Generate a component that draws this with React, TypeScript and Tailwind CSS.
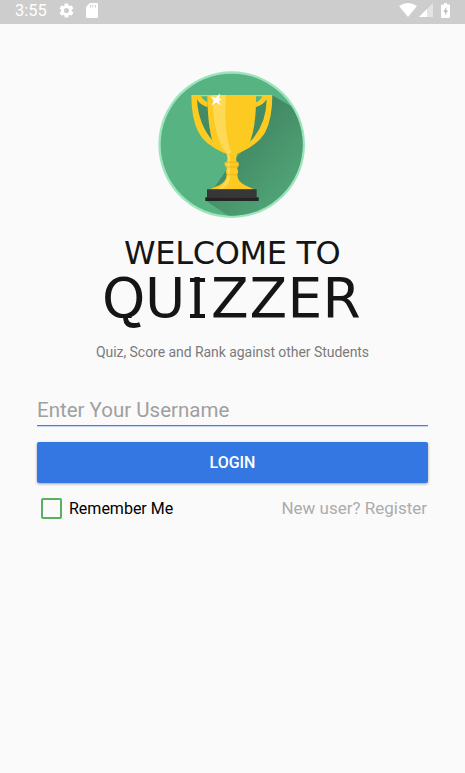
function Trophy() {
  return (
    <svg className="block h-[160px] w-[160px]" viewBox="0 0 480 480" aria-label="Trophy">
      <defs>
        <linearGradient id="shade" x1="260" y1="230" x2="430" y2="380" gradientUnits="userSpaceOnUse">
          <stop offset="0" stopColor="#428863" />
          <stop offset="1" stopColor="#51a578" />
        </linearGradient>
        <clipPath id="disc"><circle cx="245" cy="239" r="213" /></clipPath>
        <clipPath id="bowl"><path d="M172 90H318Q319 184 300 230Q285 246 264 263Q257 270 259 289Q269 292 266 302Q263 306 261 310Q267 318 262 328Q262 350 285 361L312 373H180L208 361Q230 349 230 328Q226 317 231 309Q222 303 224 293L232 289Q235 270 224 262L188 230Q173 184 172 90Z" /></clipPath>
      </defs>
      <circle cx="245" cy="239" r="220" fill="#9de4bc" />
      <circle cx="245" cy="239" r="213" fill="#57b482" />
      <g clipPath="url(#disc)">
        <path d="M367 91L540 190V480H275L166 406L240 300L300 230Z" fill="url(#shade)" />
        <path d="M137 100L150 113L174 126L190 229Q145 180 137 100Z" fill="#428b64" />
        <path d="M354 100L340 113L318 126L302 227Q346 180 354 100Z" fill="#428b64" />
      </g>
      <path d="M124 90H172V126Q151 121 141 103Q145 181 190 230L236 267L220 263Q164 239 145 201Q124 160 124 90ZM367 90H318V126Q339 121 350 103Q349 180 300 230L255 266L270 263Q326 237 346 201Q367 160 367 90Z" fill="#fdca21" />
      <path d="M153 94H175V112Q160 108 153 94ZM337 94H318V112Q331 108 337 94Z" fill="#57b482" />
      <path d="M172 90H318Q319 184 300 230Q285 246 264 263Q257 270 259 289Q269 292 266 302Q263 306 261 310Q267 318 262 328Q262 350 285 361L312 373H180L208 361Q230 349 230 328Q226 317 231 309Q222 303 224 293L232 289Q235 270 224 262L188 230Q173 184 172 90Z" fill="#fdca21" />
      <g clipPath="url(#bowl)">
        <path d="M187 90H228Q220 205 244 261L234 269Q190 225 187 90Z" fill="#fed957" />
        <path d="M232 271H239V345Q233 363 216 373H204Q232 354 233 326Z" fill="#fed957" />
        <path d="M222 292H270M228 306H267M228 329H266" stroke="#dfac1b" strokeWidth="2" />
      </g>
      <path d="M210 85L207 98L215 105L206 107L211 121L199 112L184 122L192 107L181 94L197 99Z" fill="#fff" />
      <path d="M171 373H320V397H171Z" fill="#373737" />
      <path d="M166 397H326V408H166Z" fill="#232323" />
    </svg>
  );
}

export default function App() {
  return (
    <div className="flex h-[773px] w-[465px] flex-col bg-[#fafafa] font-[Roboto,sans-serif]">
      <header className="flex h-6 items-start justify-between bg-[#cdcdcd] pr-[15px] pl-[15px] text-white">
        <div className="flex items-start">
          <span className="w-11 text-[16.5px] leading-[22px]">3:55</span>
          <svg className="mt-[2px] -ml-px h-[17px] w-[17px]" viewBox="0 0 24 24" fill="currentColor"><path d="M19.4 13a7.6 7.6 0 0 0 0-2l2.1-1.6c.2-.1.2-.4.1-.6l-2-3.5c-.1-.2-.4-.3-.6-.2l-2.5 1c-.5-.4-1.1-.7-1.7-1L14.4 2.4A.5.5 0 0 0 14 2h-4a.5.5 0 0 0-.5.4l-.4 2.7c-.6.2-1.1.6-1.7 1L5 5.1c-.3-.1-.5 0-.6.2l-2 3.5c-.1.2-.1.5.1.6L4.600 11a8 8 0 0 0 0 2l-2.100 1.600c-.2.1-.2.4-.1.6l2 3.500c.1.2.4.3.6.2l2.400-1c.6.4 1.100.7 1.700 1l.4 2.700c0 .2.2.4.5.4h4c.2 0 .4-.2.5-.4l.4-2.700c.6-.2 1.100-.6 1.700-1l2.500 1c.2.1.5 0 .6-.2l2-3.500c.1-.2.1-.5-.1-.6L19.400 13ZM12 15.600a3.600 3.600 0 1 1 0-7.200 3.600 3.600 0 0 1 0 7.200Z" /></svg>
          <svg className="mt-[3px] ml-[11px] h-[15px] w-[12px]" viewBox="0 0 12 15"><path d="M4 0H11Q12 0 12 1V14Q12 15 11 15H1Q0 15 0 14V4Z" fill="#fff" /><path d="M4.500 2V4.500M7 2V4.500M9.500 2V4.500" stroke="#cdcdcd" /></svg>
        </div>
        <div className="flex items-start">
          <svg className="mt-[3px] h-[14px] w-[18px]" viewBox="0 0 18 14"><path d="M0 3Q9-3 18 3L9 14Z" fill="#fff" /></svg>
          <svg className="mt-[3px] ml-[2px] h-[14px] w-[14px]" viewBox="0 0 14 14"><path d="M0 14L14 0V14Z" fill="#e4e4e4" /><path d="M0 14L8 6V14Z" fill="#fff" /></svg>
          <svg className="mt-[3px] ml-[8px] h-[15px] w-[9px]" viewBox="0 0 9 15"><path d="M3 0H6V1.500H8Q9 1.500 9 2.500V14Q9 15 8 15H1Q0 15 0 14V2.500Q0 1.500 1 1.500H3Z" fill="#fff" /><path d="M5.300 4L2.300 9H4.200V12.500L7 7.500H5.300Z" fill="#bdbdbd" /></svg>
        </div>
      </header>
      <main className="flex flex-col px-[37px]">
        <div className="mt-[41px] ml-[113px]"><Trophy /></div>
        <h1 className="flex flex-col whitespace-nowrap font-['DejaVu_Sans',sans-serif] text-[#151515]">
          <span className="mt-[8px] ml-[87px] text-[32px] leading-10 tracking-[-0.35px]">WELCOME TO</span>
          <span className="-mt-[4px] ml-[65px] flex h-[59px] text-[55px] leading-[58px]">
            <span className="relative w-[43px]">
              <span className="block [clip-path:inset(0_0_9px_0)]">Q</span>
              <svg className="absolute top-[47px] left-[20px] h-4 w-5" viewBox="0 0 20 16"><path d="M3.500 0V2Q4 9.500 12 9.500Q15 9.500 18 8.500" fill="none" stroke="#151515" strokeWidth="4.800" /></svg>
            </span>
            <span className="w-[41px]">U</span>
            <span className="relative w-[25px] pl-[3px] before:absolute before:top-[9px] before:left-[4px] before:h-[4px] before:w-[15px] before:bg-[#151515] after:absolute after:top-[45px] after:left-[4px] after:h-[4px] after:w-[15px] after:bg-[#151515]">I</span>
            <span className="w-[38.500px]">Z</span>
            <span className="w-[38px]">Z</span>
            <span className="w-[35px]">E</span>
            <span>R</span>
          </span>
        </h1>
        <p className="mt-[14px] text-center text-[14px] leading-5 tracking-[-0.05px] text-[#7b7b7b]">Quiz, Score and Rank against other Students</p>
        <input aria-label="Username" placeholder="Enter Your Username" className="mt-[32px] h-[32px] border-b border-[#4e80d8] bg-transparent p-0 text-[20.500px] shadow-[0_1px_0_#c5d5f3] outline-none placeholder:text-[#a0a0a0]" />
        <button className="mt-4 h-[41px] rounded-[2px] bg-[#3477e2] text-[16px] font-medium text-white shadow-[0_1px_3px_rgba(0,0,0,0.35)]">LOGIN</button>
        <div className="mt-[15px] flex h-[21px] items-center justify-between pr-[1px] pl-[4px] text-[16px]">
          <label className="flex items-center gap-2"><input type="checkbox" className="h-[21px] w-[21px] appearance-none rounded-[2px] border-2 border-[#5aaf61]" /><span className="-ml-px">Remember Me</span></label>
          <a className="text-[17px] text-[#acacac]">New user? Register</a>
        </div>
      </main>
    </div>
  );
}
